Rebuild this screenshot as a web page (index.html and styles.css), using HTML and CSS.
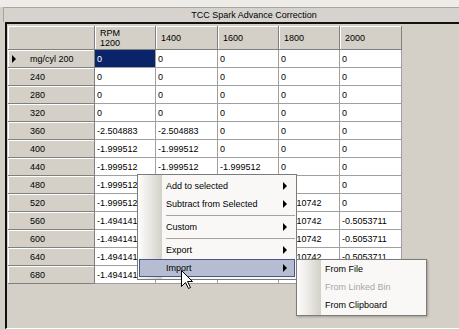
FILE: index.html
```html
<!DOCTYPE html>
<html>
<head>
<meta charset="utf-8">
<link rel="stylesheet" href="styles.css">
</head>
<body>
<div class="top"></div>
<div class="caption">TCC Spark Advance Correction</div>
<div class="panel">
  <div class="grid">
    <div class="hc"></div>
    <div class="hc">RPM<br>1200</div>
    <div class="hc">1400</div>
    <div class="hc">1600</div>
    <div class="hc">1800</div>
    <div class="hc">2000</div>

    <div class="rh"><span class="mark cur"></span>mg/cyl 200</div>
    <div class="c sel">0</div><div class="c">0</div><div class="c">0</div><div class="c">0</div><div class="c">0</div>

    <div class="rh"><span class="mark"></span>240</div>
    <div class="c">0</div><div class="c">0</div><div class="c">0</div><div class="c">0</div><div class="c">0</div>

    <div class="rh"><span class="mark"></span>280</div>
    <div class="c">0</div><div class="c">0</div><div class="c">0</div><div class="c">0</div><div class="c">0</div>

    <div class="rh"><span class="mark"></span>320</div>
    <div class="c">0</div><div class="c">0</div><div class="c">0</div><div class="c">0</div><div class="c">0</div>

    <div class="rh"><span class="mark"></span>360</div>
    <div class="c">-2.504883</div><div class="c">-2.504883</div><div class="c">0</div><div class="c">0</div><div class="c">0</div>

    <div class="rh"><span class="mark"></span>400</div>
    <div class="c">-1.999512</div><div class="c">-1.999512</div><div class="c">0</div><div class="c">0</div><div class="c">0</div>

    <div class="rh"><span class="mark"></span>440</div>
    <div class="c">-1.999512</div><div class="c">-1.999512</div><div class="c">-1.999512</div><div class="c">0</div><div class="c">0</div>

    <div class="rh"><span class="mark"></span>480</div>
    <div class="c">-1.999512</div><div class="c">-1.999512</div><div class="c">-1.999512</div><div class="c">0</div><div class="c">0</div>

    <div class="rh"><span class="mark"></span>520</div>
    <div class="c">-1.999512</div><div class="c">-1.999512</div><div class="c">-1.999512</div><div class="c">-1.010742</div><div class="c">0</div>

    <div class="rh"><span class="mark"></span>560</div>
    <div class="c">-1.494141</div><div class="c">-1.494141</div><div class="c">-1.494141</div><div class="c">-1.010742</div><div class="c">-0.5053711</div>

    <div class="rh"><span class="mark"></span>600</div>
    <div class="c">-1.494141</div><div class="c">-1.494141</div><div class="c">-1.494141</div><div class="c">-1.010742</div><div class="c">-0.5053711</div>

    <div class="rh"><span class="mark"></span>640</div>
    <div class="c">-1.494141</div><div class="c">-1.494141</div><div class="c">-1.494141</div><div class="c">-1.010742</div><div class="c">-0.5053711</div>

    <div class="rh"><span class="mark"></span>680</div>
    <div class="c">-1.494141</div><div class="c">-1.494141</div><div class="c">-1.494141</div><div class="c">-1.010742</div><div class="c">-0.5053711</div>
  </div>
</div>

<div class="menu">
  <div class="item">Add to selected<span class="arr"></span></div>
  <div class="item">Subtract from Selected<span class="arr"></span></div>
  <div class="sep"></div>
  <div class="item">Custom<span class="arr"></span></div>
  <div class="sep"></div>
  <div class="item">Export<span class="arr"></span></div>
  <div class="item hi">Import<span class="arr"></span></div>
</div>

<div class="menu sub">
  <div class="item">From File</div>
  <div class="item dis">From Linked Bin</div>
  <div class="item">From Clipboard</div>
</div>

<svg class="cursor" width="12" height="20" viewBox="0 0 12 20">
  <path d="M0.5 0.5 L0.5 16.5 L4.5 12.5 L7.5 18.5 L9.5 17.5 L6.5 11.5 L11.5 11.5 Z" fill="#fff" stroke="#000" stroke-width="1" stroke-linejoin="miter"/>
</svg>
</body>
</html>
```

FILE: styles.css
```css
* { box-sizing: border-box; }
html, body { margin: 0; padding: 0; }
body {
  width: 459px;
  height: 330px;
  overflow: hidden;
  position: relative;
  background: #d4d0c8;
  font-family: "Liberation Sans", Arial, sans-serif;
  font-size: 9px;
  color: #000;
}
.top { height: 7px; background: #edece9; }
.caption {
  margin-left: 3px;
  height: 15px;
  border-top: 1px solid #a8a59e;
  border-left: 1px solid #a8a59e;
  background: #d6d3ce;
  line-height: 14px;
  text-align: center;
  padding-left: 45px;
}
.panel {
  margin-left: 5px;
  height: 307px;
  border-top: 2px solid #111;
  border-left: 2px solid #111;
  border-bottom: 1px solid #fff;
  padding: 2px 0 0 1px;
}
.grid {
  display: grid;
  grid-template-columns: 87px 61px 62px 61px 61px 62px;
  grid-template-rows: 24px repeat(13, 18px);
  width: 394px;
}
.hc, .rh {
  background: #d4d0c8;
  border-right: 1px solid #808080;
  border-bottom: 1px solid #808080;
  box-shadow: inset 1px 1px 0 #fff;
  display: flex;
  align-items: center;
  white-space: nowrap;
}
.hc { padding-left: 5px; line-height: 10px; }
.rh { padding-left: 4px; }
.mark { width: 18px; display: flex; align-items: center; }
.mark.cur::before {
  content: "";
  border-left: 4px solid #000;
  border-top: 4px solid transparent;
  border-bottom: 4px solid transparent;
}
.c {
  background: #fff;
  border-right: 1px solid #a0a0a0;
  border-bottom: 1px solid #a0a0a0;
  display: flex;
  align-items: center;
  padding-left: 2px;
  white-space: nowrap;
  overflow: hidden;
}
.c.sel { background: #0a246a; color: #fff; }

.menu {
  position: absolute;
  left: 137px;
  top: 174px;
  width: 160px;
  border: 1px solid #7c7b78;
  padding: 2px 1px;
  background: linear-gradient(to right, #fdfdfc 0, #eae8e4 12px, #d3d0c9 24px, #f9f8f7 24px);
}
.menu.sub {
  left: 296px;
  top: 259px;
  width: 131px;
  padding: 0 1px 1px 1px;
  box-shadow: 1px 1px 2px rgba(0, 0, 0, 0.25);
}
.item {
  height: 18px;
  display: flex;
  align-items: center;
  padding-left: 27px;
  white-space: nowrap;
}
.item.hi {
  background: #b6bdd2;
  border: 1px solid #4a5888;
  padding-left: 26px;
}
.item.dis { color: #a7a6a2; }
.arr {
  margin-left: auto;
  margin-right: 8px;
  border-left: 4px solid #000;
  border-top: 4px solid transparent;
  border-bottom: 4px solid transparent;
}
.item.hi .arr { margin-right: 7px; }
.sep {
  height: 5px;
  display: flex;
  align-items: center;
  padding-left: 27px;
}
.sep::before {
  content: "";
  flex: 1;
  height: 1px;
  background: #a6a39c;
}
.cursor {
  position: absolute;
  left: 181px;
  top: 270px;
}
```
